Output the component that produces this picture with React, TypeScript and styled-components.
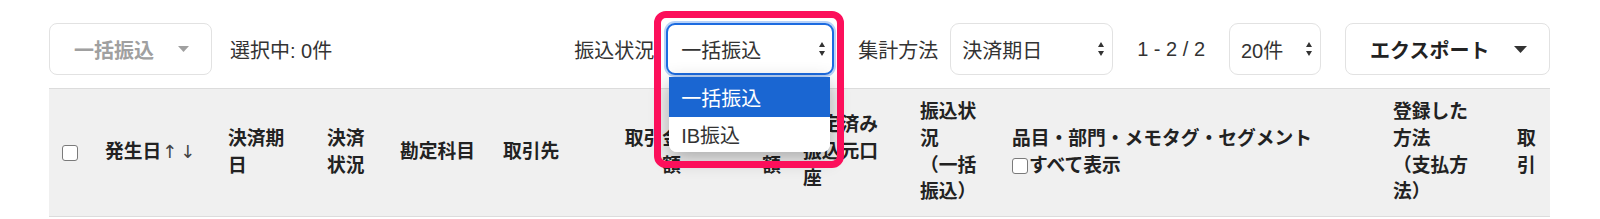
import React from 'react';
import styled, { createGlobalStyle, css } from 'styled-components';

const GlobalStyle = createGlobalStyle`
  html, body {
    margin: 0;
    padding: 0;
    background: #fff;
  }
  body {
    font-family: "Liberation Sans", "Noto Sans CJK JP", sans-serif;
    color: #333;
  }
`;

const Page = styled.div`
  width: 1600px;
  height: 219px;
  box-sizing: border-box;
  padding: 0 50px 0 49px;
  overflow: hidden;
`;

const Toolbar = styled.div`
  display: flex;
  align-items: center;
  height: 88px;
  box-sizing: border-box;
  padding: 23px 0 13px;
`;

const LeftGroup = styled.div`
  display: flex;
  align-items: center;
  gap: 18px;
`;

const RightGroup = styled.div`
  display: flex;
  align-items: center;
  gap: 24px;
  margin-left: auto;
`;

const Field = styled.div`
  display: flex;
  align-items: center;
  gap: 12px;
`;

const Label = styled.span`
  font-size: 20px;
  color: #333;
  white-space: nowrap;
`;

const MenuButton = styled.div<{ $w: number; $disabled?: boolean }>`
  width: ${p => p.$w}px;
  height: 52px;
  box-sizing: border-box;
  display: flex;
  align-items: center;
  justify-content: space-between;
  padding: 0 22px 0 24px;
  border: 1px solid #e2e2e2;
  border-radius: 8px;
  background: #fff;
  font-size: 20px;
  font-weight: 700;
  color: ${p => (p.$disabled ? '#a0a0a0' : '#222')};
  white-space: nowrap;
`;

const SelectWrap = styled.div`
  position: relative;
`;

const SelectBox = styled.div<{ $w: number; $focus?: boolean }>`
  width: ${p => p.$w}px;
  height: 52px;
  box-sizing: border-box;
  display: flex;
  align-items: center;
  justify-content: space-between;
  padding: 0 8px 0 11px;
  border: 1px solid #e2e2e2;
  border-radius: 9px;
  background: #fff;
  font-size: 20px;
  color: #333;
  white-space: nowrap;
  ${p =>
    p.$focus &&
    css`
      border: 2px solid #1c6be0;
      padding: 0 7px 0 13px;
      box-shadow: 0 0 0 2px #b8d2f8;
    `}
`;

const DropList = styled.div`
  position: absolute;
  left: 3px;
  top: 54px;
  width: 161px;
  background: #fff;
  border-radius: 0 0 8px 8px;
  box-shadow: 0 6px 20px rgba(0, 0, 0, 0.3);
  overflow: hidden;
  z-index: 5;
`;

const DropItem = styled.div<{ $active?: boolean }>`
  height: ${p => (p.$active ? 40 : 35)}px;
  display: flex;
  align-items: center;
  padding-left: 12px;
  font-size: 20px;
  color: ${p => (p.$active ? '#fff' : '#333')};
  background: ${p => (p.$active ? '#1a66d2' : '#fff')};
`;

const Highlight = styled.div`
  position: absolute;
  left: -12px;
  top: -12px;
  width: 190px;
  height: 157px;
  box-sizing: border-box;
  border: 7px solid #fc0f5b;
  border-radius: 12px;
  pointer-events: none;
  z-index: 6;
`;

const TableWrap = styled.div`
  width: 1501px;
  overflow: hidden;
  border-top: 1px solid #dcdcdc;
`;

const Table = styled.table`
  width: 1518px;
  table-layout: fixed;
  border-collapse: collapse;
`;

const Th = styled.th<{ $w: number; $right?: boolean; $pl?: number }>`
  width: ${p => p.$w}px;
  box-sizing: border-box;
  padding: 10px 10px 10px ${p => p.$pl ?? 10}px;
  background: #f0f0f0;
  border-bottom: 1px solid #dcdcdc;
  font-size: 18.75px;
  line-height: 26.8px;
  font-weight: 700;
  color: #222;
  text-align: ${p => (p.$right ? 'right' : 'left')};
  vertical-align: middle;
  white-space: normal;
`;

const HeadText = styled.span<{ $max: number; $right?: boolean }>`
  display: block;
  max-width: ${p => p.$max}px;
  margin-left: ${p => (p.$right ? 'auto' : '0')};
`;

const CheckBox = styled.span<{ $size: number }>`
  display: inline-block;
  width: ${p => p.$size}px;
  height: ${p => p.$size}px;
  box-sizing: border-box;
  border: 1.5px solid #7a7a7a;
  border-radius: 3px;
  background: #fff;
  vertical-align: middle;
`;

const SortArrows = styled.span`
  font-family: "DejaVu Sans", sans-serif;
  font-size: 18px;
  font-weight: 400;
  color: #444;
  letter-spacing: 3px;
  margin-left: 1px;
`;

const ShowAll = styled.label`
  display: flex;
  align-items: center;
  gap: 1px;
`;

const Caret = ({ w, color }: { w: number; color: string }) => (
  <svg width={w} height={Math.round(w / 2)} viewBox={`0 0 ${w} ${Math.round(w / 2)}`}>
    <path d={`M0 0H${w}L${w / 2} ${Math.round(w / 2)}Z`} fill={color} />
  </svg>
);

const Spin = () => (
  <svg width="6" height="14" viewBox="0 0 6 14">
    <path d="M3 0L6 5H0Z M0 9H6L3 14Z" fill="#333" />
  </svg>
);

export default function App() {
  return (
    <>
      <GlobalStyle />
      <Page>
        <Toolbar>
          <LeftGroup>
            <MenuButton $w={163} $disabled>
              一括振込
              <Caret w={11} color="#a0a0a0" />
            </MenuButton>
            <Label>選択中: 0件</Label>
          </LeftGroup>

          <RightGroup>
            <Field>
              <Label>振込状況</Label>
              <SelectWrap>
                <SelectBox $w={168} $focus>
                  一括振込
                  <Spin />
                </SelectBox>
                <DropList>
                  <DropItem $active>一括振込</DropItem>
                  <DropItem>IB振込</DropItem>
                </DropList>
                <Highlight />
              </SelectWrap>
            </Field>
            <Field>
              <Label>集計方法</Label>
              <SelectBox $w={163}>
                決済期日
                <Spin />
              </SelectBox>
            </Field>
            <Label>1 - 2 / 2</Label>
            <SelectBox $w={92}>
              20件
              <Spin />
            </SelectBox>
            <MenuButton $w={205}>
              エクスポート
              <Caret w={13} color="#333" />
            </MenuButton>
          </RightGroup>
        </Toolbar>

        <TableWrap>
          <Table>
            <thead>
              <tr>
                <Th $w={46} $pl={13}>
                  <CheckBox $size={16} />
                </Th>
                <Th $w={123}>
                  発生日<SortArrows>↑↓</SortArrows>
                </Th>
                <Th $w={99}>
                  <HeadText $max={60}>決済期日</HeadText>
                </Th>
                <Th $w={73}>
                  <HeadText $max={40}>決済状況</HeadText>
                </Th>
                <Th $w={103}>勘定科目</Th>
                <Th $w={98}>取引先</Th>
                <Th $w={100} $right>
                  <HeadText $max={60} $right>取引金額</HeadText>
                </Th>
                <Th $w={100} $right>
                  <HeadText $max={76} $right>未決済金額</HeadText>
                </Th>
                <Th $w={119} $pl={12}>
                  <HeadText $max={78}>設定済み振込元口座</HeadText>
                </Th>
                <Th $w={92}>
                  <HeadText $max={60}>
                    振込状況
                    <br />
                    （一括振込）
                  </HeadText>
                </Th>
                <Th $w={381}>
                  品目・部門・メモタグ・セグメント
                  <ShowAll>
                    <CheckBox $size={16} />
                    すべて表示
                  </ShowAll>
                </Th>
                <Th $w={124}>
                  <HeadText $max={78}>
                    登録した方法
                    <br />
                    （支払方法）
                  </HeadText>
                </Th>
                <Th $w={60}>
                  <HeadText $max={20}>取引</HeadText>
                </Th>
              </tr>
            </thead>
          </Table>
        </TableWrap>
      </Page>
    </>
  );
}
